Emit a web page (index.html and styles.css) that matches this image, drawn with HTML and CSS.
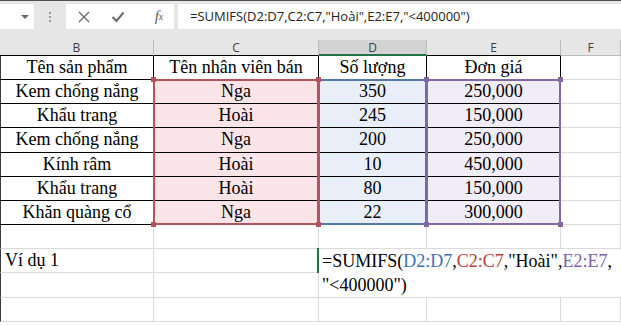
FILE: index.html
```html
<!DOCTYPE html>
<html lang="vi">
<head>
    <meta charset="UTF-8">
    <title>SUMIFS - Ví dụ 1</title>
    <link rel="stylesheet" href="styles.css">
</head>
<body>

    <!-- Thanh công thức -->
    <div class="formula-bar">
        <div class="name-box"><span class="name-caret"></span></div>
        <div class="grip"><i></i><i></i><i></i></div>
        <div class="fx-tools">
            <span class="tool">
                <svg width="12" height="12" viewBox="0 0 12 12"><path d="M1 1 L11 11 M11 1 L1 11" stroke="#6a6a6a" stroke-width="1.4" fill="none"/></svg>
            </span>
            <span class="tool">
                <svg width="14" height="12" viewBox="0 0 14 12"><path d="M1.5 6 L5.5 10 L12.5 1.5" stroke="#6a6a6a" stroke-width="2" fill="none"/></svg>
            </span>
            <span class="tool fx"><i>f</i><sub>x</sub></span>
        </div>
        <div class="formula-input">=SUMIFS(D2:D7,C2:C7,"Hoài",E2:E7,"&lt;400000")</div>
    </div>

    <!-- Bảng tính -->
    <div class="sheet">
        <div class="ch hb">B</div>
        <div class="ch hb">C</div>
        <div class="ch active">D</div>
        <div class="ch hb">E</div>
        <div class="ch">F</div>

        <div class="cell first tb">Tên sản phẩm</div>
        <div class="cell tb">Tên nhân viên bán</div>
        <div class="cell tb">Số lượng</div>
        <div class="cell tb">Đơn giá</div>
        <div class="cell"></div>

        <div class="cell first tb">Kem chống nắng</div>
        <div class="cell tb pink">Nga</div>
        <div class="cell tb blue">350</div>
        <div class="cell tb lilac">250,000</div>
        <div class="cell"></div>

        <div class="cell first tb">Khẩu trang</div>
        <div class="cell tb pink">Hoài</div>
        <div class="cell tb blue">245</div>
        <div class="cell tb lilac">150,000</div>
        <div class="cell"></div>

        <div class="cell first tb">Kem chống nắng</div>
        <div class="cell tb pink">Nga</div>
        <div class="cell tb blue">200</div>
        <div class="cell tb lilac">250,000</div>
        <div class="cell"></div>

        <div class="cell first tb">Kính râm</div>
        <div class="cell tb pink">Hoài</div>
        <div class="cell tb blue">10</div>
        <div class="cell tb lilac">450,000</div>
        <div class="cell"></div>

        <div class="cell first tb">Khẩu trang</div>
        <div class="cell tb pink">Hoài</div>
        <div class="cell tb blue">80</div>
        <div class="cell tb lilac">150,000</div>
        <div class="cell"></div>

        <div class="cell first tb">Khăn quàng cổ</div>
        <div class="cell tb pink">Nga</div>
        <div class="cell tb blue">22</div>
        <div class="cell tb lilac">300,000</div>
        <div class="cell"></div>

        <div class="cell first"></div>
        <div class="cell"></div>
        <div class="cell"></div>
        <div class="cell"></div>
        <div class="cell"></div>

        <div class="cell first left">Ví dụ 1</div>
        <div class="cell"></div>
        <div class="edit">=SUMIFS(<span class="ref-d">D2:D7</span>,<span class="ref-c">C2:C7</span>,"Hoài",<span class="ref-e">E2:E7</span>,<br>"&lt;400000")</div>

        <div class="cell first"></div>
        <div class="cell"></div>

        <div class="cell first"></div>
        <div class="cell"></div>
        <div class="cell"></div>
        <div class="cell"></div>
        <div class="cell"></div>

        <!-- Vùng tham chiếu của công thức -->
        <div class="range range-d"><span class="h tl"></span><span class="h tr"></span><span class="h bl"></span><span class="h br"></span></div>
        <div class="range range-e"><span class="h tl"></span><span class="h tr"></span><span class="h bl"></span><span class="h br"></span></div>
        <div class="range range-c"><span class="h tl"></span><span class="h tr"></span><span class="h bl"></span><span class="h br"></span></div>
    </div>

</body>
</html>
```

FILE: styles.css
```css
body {
    margin: 0;
    background-color: #ffffff;
    font-family: "Liberation Serif", serif;
    overflow: hidden;
}

/* Thanh công thức */
.formula-bar {
    display: flex;
    height: 40px;
    box-sizing: border-box;
    border-top: 1px solid #505050;
    padding-top: 3px;
    background-color: #e6e6e6;
}

.name-box {
    width: 34px;
    height: 25px;
    box-sizing: border-box;
    background-color: #ffffff;
    display: flex;
    align-items: center;
    justify-content: flex-end;
    padding-right: 5px;
}

.name-caret {
    width: 0;
    height: 0;
    border-left: 4px solid transparent;
    border-right: 4px solid transparent;
    border-top: 4px solid #6a6a6a;
}

.grip {
    width: 32px;
    height: 25px;
    display: flex;
    flex-direction: column;
    align-items: center;
    justify-content: center;
    gap: 2px;
}

.grip i {
    width: 2px;
    height: 2px;
    background-color: #9a9a9a;
}

.fx-tools {
    width: 108px;
    height: 25px;
    box-sizing: border-box;
    background-color: #ffffff;
    display: flex;
    align-items: center;
    padding-left: 8px;
    gap: 14px;
}

.tool {
    width: 20px;
    display: flex;
    justify-content: center;
    align-items: center;
}

.tool.fx {
    margin-left: 7px;
    font-family: "Liberation Serif", serif;
    font-style: italic;
    font-size: 15px;
    color: #5a5a5a;
}

.tool.fx sub {
    font-size: 10px;
    vertical-align: -1px;
}

.formula-input {
    flex: 1;
    margin-left: 4px;
    height: 25px;
    box-sizing: border-box;
    padding-left: 12px;
    background-color: #ffffff;
    font-family: "Open Sans", sans-serif;
    font-size: 13px;
    line-height: 25px;
    color: #222222;
    white-space: nowrap;
}

/* Bảng tính */
.sheet {
    position: relative;
    display: grid;
    grid-template-columns: 154px 165px 108px 134px 1fr;
    grid-template-rows: 16px 24px 24px 24px 25px 24px 24px 24px 24px 24px 25px 24px;
}

.ch {
    box-sizing: border-box;
    background-color: #e6e6e6;
    border-right: 1px solid #bdbdbd;
    border-bottom: 1px solid #bdbdbd;
    font-family: "Open Sans", sans-serif;
    font-size: 12px;
    line-height: 15px;
    text-align: center;
    color: #3c3c3c;
}

.ch.hb {
    border-bottom-color: #000000;
}

.ch.active {
    background-color: #d3d3d3;
    border-bottom: 2px solid #217346;
    color: #3a3a3a;
}

.cell {
    box-sizing: border-box;
    border-right: 1px solid #dadada;
    border-bottom: 1px solid #dadada;
    font-size: 18px;
    line-height: 23px;
    text-align: center;
    white-space: nowrap;
    color: #000000;
}

.cell.tb {
    border-color: #000000;
}

.cell.first {
    border-left: 1px solid #3c3c3c;
}

.cell.left {
    text-align: left;
    padding-left: 4px;
}

.pink { background-color: #f9e5e7; }
.blue { background-color: #e8eff8; }
.lilac { background-color: #f1edf7; }

/* Ô đang sửa công thức */
.edit {
    grid-column: 3 / 6;
    grid-row: 10 / 12;
    position: relative;
    background-color: #ffffff;
    border-bottom: 1px solid #dadada;
    padding-left: 3px;
    font-size: 18px;
    line-height: 24px;
    white-space: nowrap;
}

.edit::before {
    content: "";
    position: absolute;
    left: -2px;
    top: -1px;
    width: 2px;
    height: 25px;
    background-color: #217346;
}

.ref-d { color: #3d6fb4; }
.ref-c { color: #b4403c; }
.ref-e { color: #7f62a3; }

.range {
    position: absolute;
    top: -1px;
    left: -1px;
    right: 0;
    bottom: 0;
    border: 2px solid;
    grid-row: 3 / 9;
}

.range-c { grid-column: 2 / 3; border-color: #b5525a; }
.range-d { grid-column: 3 / 4; border-color: #5479a6; }
.range-e { grid-column: 4 / 5; border-color: #8468a6; }

.h {
    position: absolute;
    width: 5px;
    height: 5px;
}

.range-c .h { background-color: #b5525a; }
.range-d .h { background-color: #5479a6; }
.range-e .h { background-color: #8468a6; }

.h.tl { left: -4px; top: -4px; }
.h.tr { right: -4px; top: -4px; }
.h.bl { left: -4px; bottom: -4px; }
.h.br { right: -4px; bottom: -4px; }
```
